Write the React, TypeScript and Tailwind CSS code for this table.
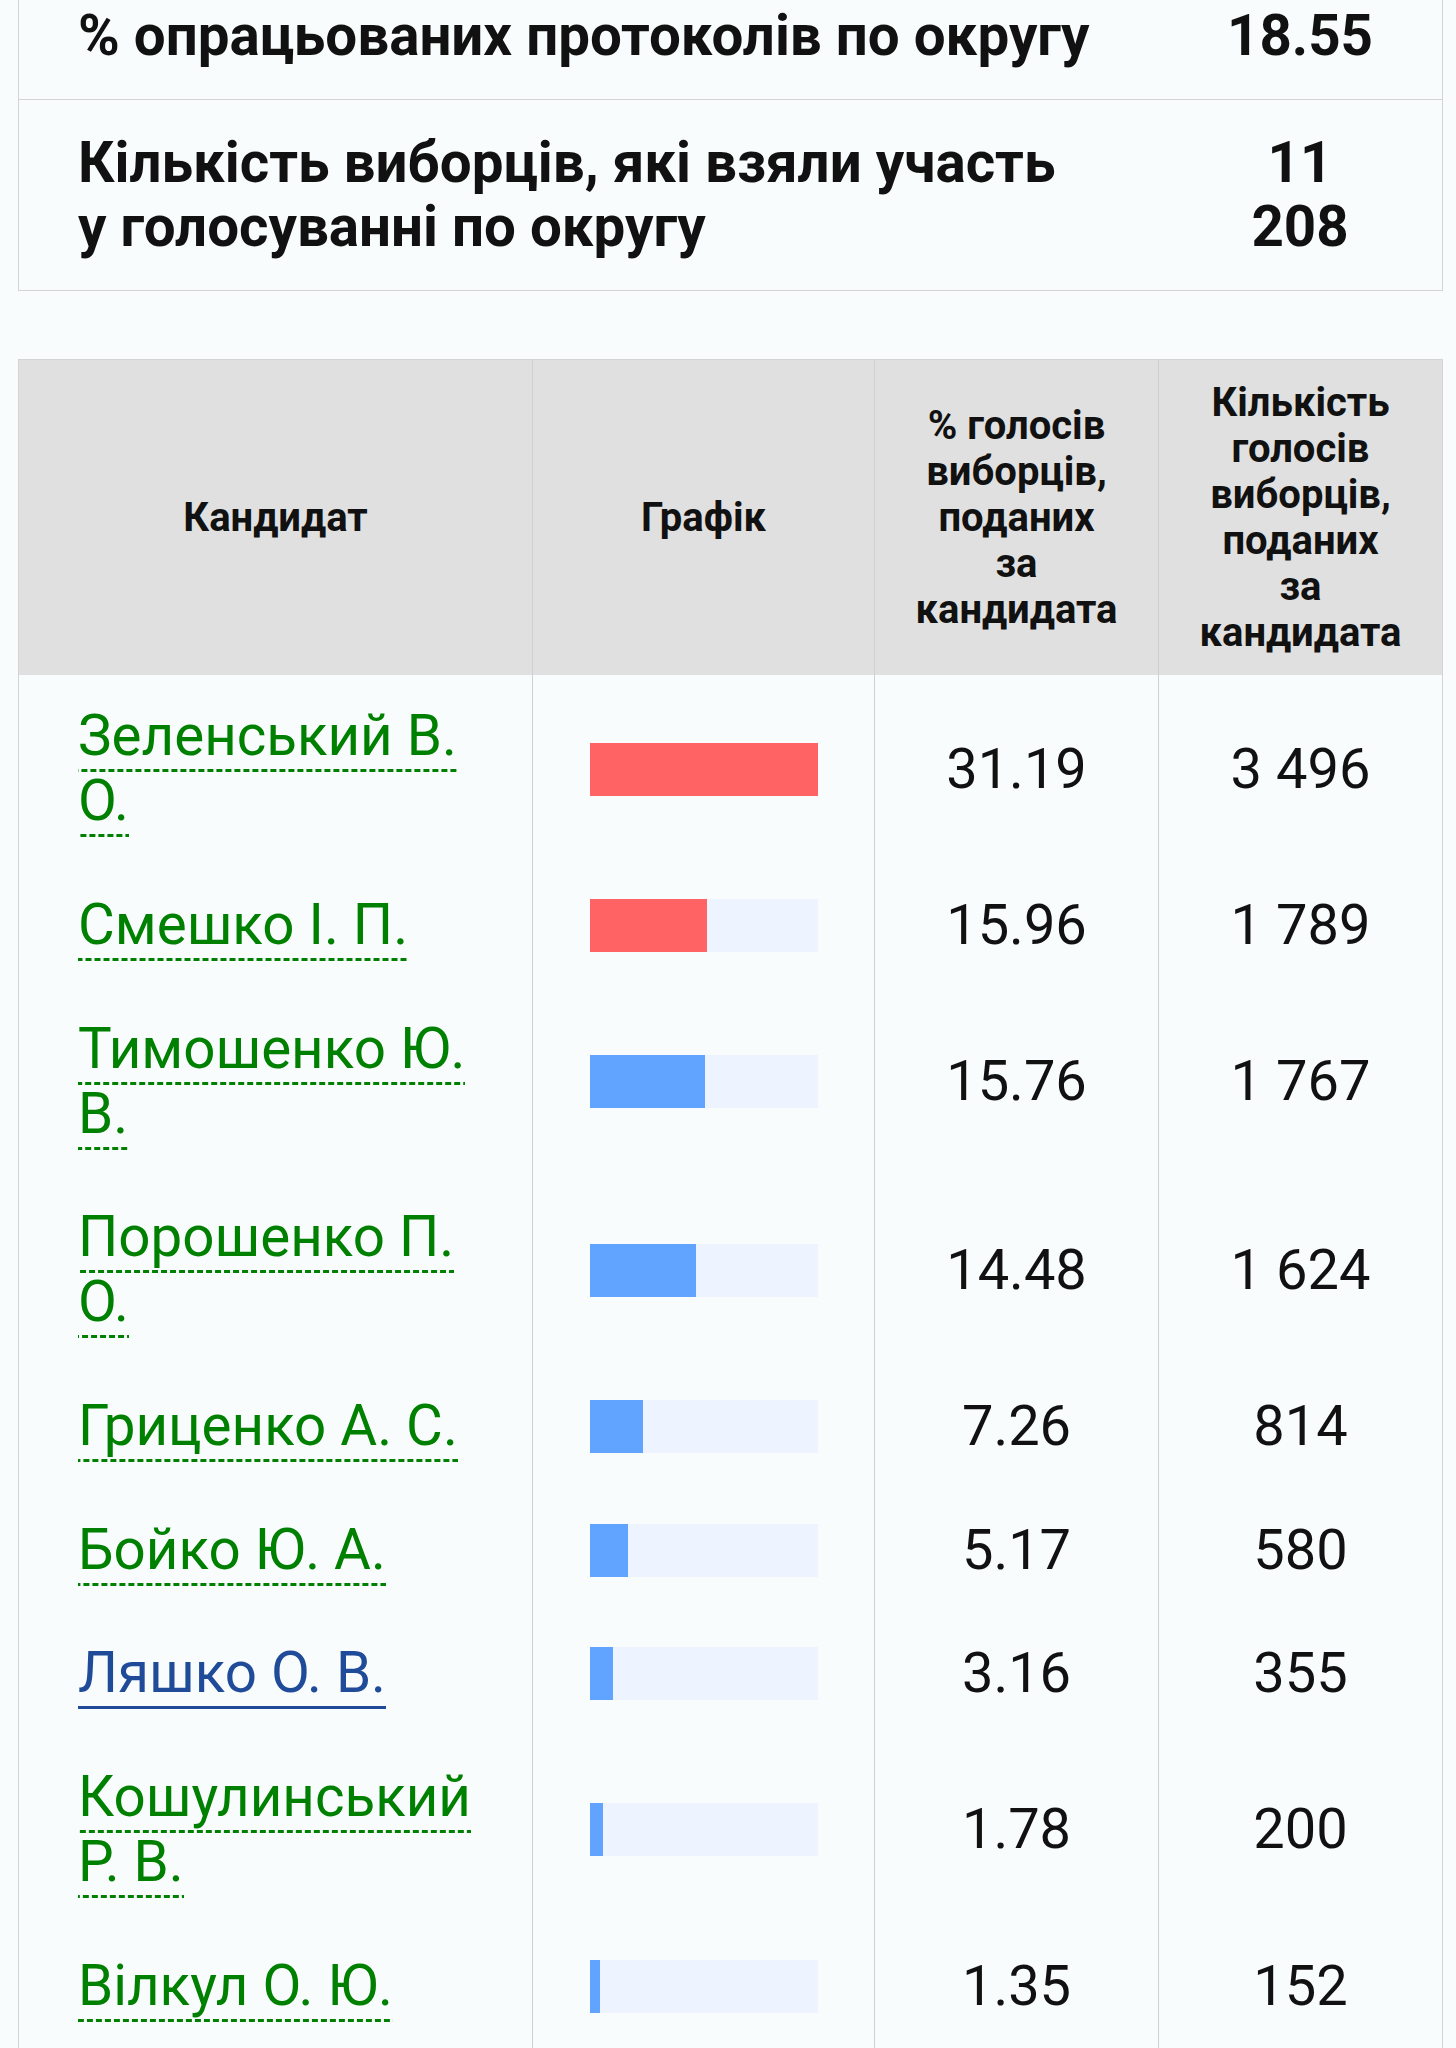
import React from "react";

type Row = {
  name: React.ReactNode;
  pct: number;
  pctText: string;
  count: string;
  color: "red" | "blue";
  visited?: boolean;
};

const MAX = 31.19;
const BAR_W = 228;

const rows: Row[] = [
  { name: <>Зеленський В.<br />О.</>, pct: 31.19, pctText: "31.19", count: "3 496", color: "red" },
  { name: <>Смешко І. П.</>, pct: 15.96, pctText: "15.96", count: "1 789", color: "red" },
  { name: <>Тимошенко Ю.<br />В.</>, pct: 15.76, pctText: "15.76", count: "1 767", color: "blue" },
  { name: <>Порошенко П.<br />О.</>, pct: 14.48, pctText: "14.48", count: "1 624", color: "blue" },
  { name: <>Гриценко А. С.</>, pct: 7.26, pctText: "7.26", count: "814", color: "blue" },
  { name: <>Бойко Ю. А.</>, pct: 5.17, pctText: "5.17", count: "580", color: "blue" },
  { name: <>Ляшко О. В.</>, pct: 3.16, pctText: "3.16", count: "355", color: "blue", visited: true },
  { name: <>Кошулинський<br />Р. В.</>, pct: 1.78, pctText: "1.78", count: "200", color: "blue" },
  { name: <>Вілкул О. Ю.</>, pct: 1.35, pctText: "1.35", count: "152", color: "blue" },
];

function Bar({ pct, color }: { pct: number; color: "red" | "blue" }) {
  const w = Math.round((pct / MAX) * BAR_W);
  return (
    <div className="flex h-[53px] w-[228px] bg-[#eef4ff]">
      <div
        className={color === "red" ? "h-full bg-[#ff6363]" : "h-full bg-[#61a4ff]"}
        style={{ width: `${w}px` }}
      />
    </div>
  );
}

export default function App() {
  return (
    <div className="flex min-h-[2048px] flex-col overflow-hidden bg-[#f9fcfd] font-['Roboto',sans-serif] text-[#111]">
      {/* Summary table */}
      <div className="ml-[18px] mt-[-28px] w-[1425px] border border-[#d4d4d4]">
        <div className="flex border-b border-[#d4d4d4]">
          <div className="flex-1 py-[31px] pl-[59px] text-[56.5px] font-bold leading-[64px]">
            % опрацьованих протоколів по округу
          </div>
          <div className="flex w-[284px] items-center justify-center py-[31px] text-center text-[56.5px] font-bold leading-[64px]">
            18.55
          </div>
        </div>
        <div className="flex">
          <div className="flex-1 py-[31px] pl-[59px] text-[56.5px] font-bold leading-[64px]">
            Кількість виборців, які взяли участь
            <br />у голосуванні по округу
          </div>
          <div className="flex w-[284px] items-center justify-center py-[31px] text-center text-[56.5px] font-bold leading-[64px]">
            11
            <br />
            208
          </div>
        </div>
      </div>

      {/* Results table */}
      <div className="ml-[18px] mt-[68px] w-[1425px] border border-[#d4d4d4]">
        <div className="grid grid-cols-[513px_342px_284px_1fr]">
          {/* header */}
          <div className="flex items-center justify-center bg-[#e0e0e0] py-[19.5px] text-[40px] font-bold leading-[46px]">
            Кандидат
          </div>
          <div className="flex items-center justify-center border-l border-[#d0d0d0] bg-[#e0e0e0] py-[19.5px] text-[40px] font-bold leading-[46px]">
            Графік
          </div>
          <div className="flex items-center justify-center border-l border-[#d0d0d0] bg-[#e0e0e0] py-[19.5px] text-center text-[40px] font-bold leading-[46px]">
            <span>
              % голосів
              <br />
              виборців,
              <br />
              поданих
              <br />
              за
              <br />
              кандидата
            </span>
          </div>
          <div className="flex items-center justify-center border-l border-[#d0d0d0] bg-[#e0e0e0] py-[19.5px] text-center text-[40px] font-bold leading-[46px]">
            <span>
              Кількість
              <br />
              голосів
              <br />
              виборців,
              <br />
              поданих
              <br />
              за
              <br />
              кандидата
            </span>
          </div>

          {rows.map((r, i) => (
            <React.Fragment key={i}>
              <div className="py-[29.33px] pl-[59px] pr-[10px] text-[56.5px] leading-[65px]">
                {r.visited ? (
                  <span className="border-b-[3px] border-[#1f4b99] text-[#1f4b99]">{r.name}</span>
                ) : (
                  <span className="bg-[linear-gradient(90deg,#008000_6px,transparent_6px)] bg-[length:9px_3px] bg-bottom bg-repeat-x pb-[3px] text-[#008000]">
                    {r.name}
                  </span>
                )}
              </div>
              <div className="flex items-center justify-center border-l border-[#d0d0d0]">
                <Bar pct={r.pct} color={r.color} />
              </div>
              <div className="flex items-center justify-center border-l border-[#d0d0d0] text-[56px] leading-[65px]">
                {r.pctText}
              </div>
              <div className="flex items-center justify-center border-l border-[#d0d0d0] text-[56px] leading-[65px]">
                {r.count}
              </div>
            </React.Fragment>
          ))}
        </div>
      </div>
    </div>
  );
}
